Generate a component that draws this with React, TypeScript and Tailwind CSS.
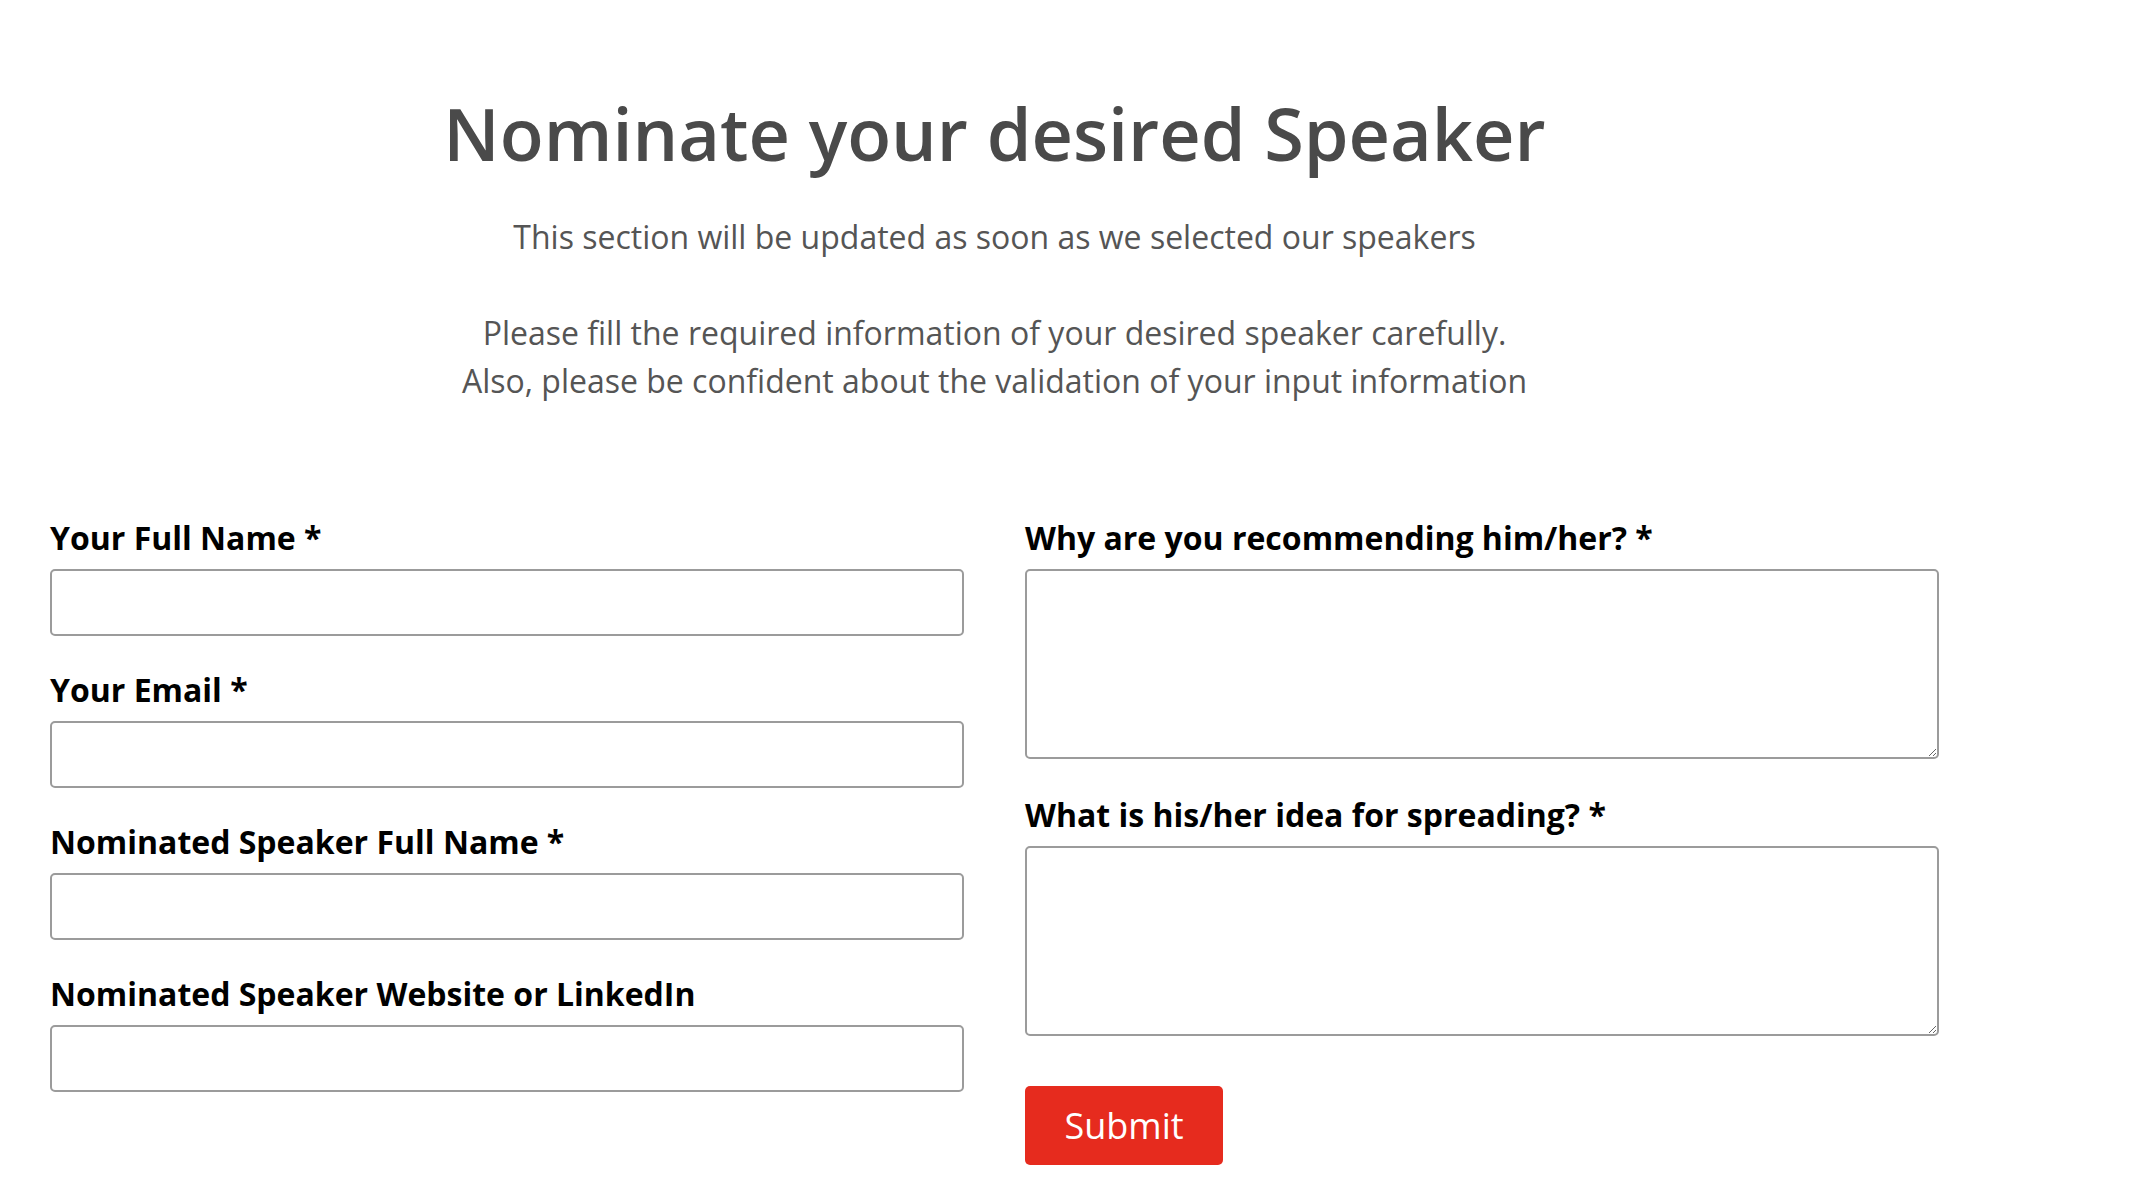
import React from "react";

const font = { fontFamily: '"Open Sans", "Noto Sans", sans-serif' };

function Field({ label, last }: { label: string; last?: boolean }) {
  return (
    <div className={last ? "" : "mb-[27px]"}>
      <label className="block text-[32px] leading-[54px] font-bold text-black">{label}</label>
      <input
        type="text"
        className="mt-[4px] block w-full h-[67px] border-2 border-[#9b9b9b] rounded-[5px] bg-white outline-none"
      />
    </div>
  );
}

function Area({ label }: { label: string }) {
  return (
    <div className="mb-[29px]">
      <label className="block text-[32px] leading-[54px] font-bold text-black">{label}</label>
      <textarea className="mt-[4px] block w-full h-[190px] border-2 border-[#9b9b9b] rounded-[5px] bg-white outline-none" />
    </div>
  );
}

export default function App() {
  return (
    <div className="min-h-[1190px] bg-white" style={font}>
      <div className="ml-[50px] w-[1889px] pt-[90px]">
        <h1 className="text-center text-[72px] leading-[86px] font-semibold text-[#4a4a4a]">
          Nominate your desired Speaker
        </h1>
        <p className="mt-[37px] text-center text-[32px] leading-[48px] text-[#555555]">
          This section will be updated as soon as we selected our speakers
          <br />
          <br />
          Please fill the required information of your desired speaker carefully.
          <br />
          Also, please be confident about the validation of your input information
        </p>
        <div className="mt-[106px] grid grid-cols-[914px_914px] gap-x-[61px]">
          <div>
            <Field label="Your Full Name *" />
            <Field label="Your Email *" />
            <Field label="Nominated Speaker Full Name *" />
            <Field label="Nominated Speaker Website or LinkedIn" last />
          </div>
          <div>
            <Area label="Why are you recommending him/her? *" />
            <Area label="What is his/her idea for spreading? *" />
            <button
              type="button"
              className="mt-[21px] w-[198px] h-[79px] rounded-[5px] bg-[#e62b1e] text-white text-[36px] leading-none"
            >
              Submit
            </button>
          </div>
        </div>
      </div>
    </div>
  );
}
